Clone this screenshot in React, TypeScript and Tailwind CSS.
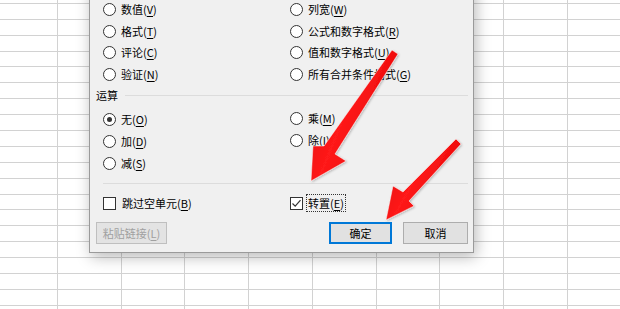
import React from "react";

type Opt = { label: string; key: string; checked?: boolean };

const pasteLeft: Opt[] = [
  { label: "数值", key: "V" },
  { label: "格式", key: "T" },
  { label: "评论", key: "C" },
  { label: "验证", key: "N" },
];

const pasteRight: Opt[] = [
  { label: "列宽", key: "W" },
  { label: "公式和数字格式", key: "R" },
  { label: "值和数字格式", key: "U" },
  { label: "所有合并条件格式", key: "G" },
];

const opsLeft: Opt[] = [
  { label: "无", key: "O", checked: true },
  { label: "加", key: "D" },
  { label: "减", key: "S" },
];

const opsRight: Opt[] = [
  { label: "乘", key: "M" },
  { label: "除", key: "I" },
];

const Label = ({ label, k }: { label: string; k: string }) => (
  <span className="whitespace-nowrap text-[11px] leading-none text-black">
    {label}(<span className="underline underline-offset-2">{k}</span>)
  </span>
);

const Radio = ({ checked }: { checked?: boolean }) => (
  <span className="flex h-[13px] w-[13px] shrink-0 items-center justify-center rounded-full border border-[#333] bg-white">
    {checked && <span className="h-[5px] w-[5px] rounded-full bg-[#333]" />}
  </span>
);

const Checkbox = ({ checked }: { checked?: boolean }) => (
  <span className="flex h-[13px] w-[13px] shrink-0 items-center justify-center border border-[#333] bg-white">
    {checked && (
      <svg width="11" height="11" viewBox="0 0 11 11">
        <path d="M1.5 5.5 L4.2 8.2 L9.5 2.2" fill="none" stroke="#333" strokeWidth="1.2" />
      </svg>
    )}
  </span>
);

const RadioRow = ({ opt, h }: { opt: Opt; h: string }) => (
  <div className={`flex items-center gap-[5px] ${h}`}>
    <Radio checked={opt.checked} />
    <Label label={opt.label} k={opt.key} />
  </div>
);

function SheetGrid() {
  const rows = Array.from({ length: 21 });
  const cols = Array.from({ length: 11 });
  return (
    <div className="-ml-[6px] -mt-[12px] flex flex-col">
      {rows.map((_, r) => (
        <div key={r} className="flex">
          {cols.map((_, c) => (
            <div
              key={c}
              className="h-[15.9px] w-[63.75px] shrink-0 border-b border-r border-[#d2d2d2]"
            />
          ))}
        </div>
      ))}
    </div>
  );
}

function PasteDialog() {
  return (
    <div className="absolute left-[89px] top-[-14px] flex w-[385px] flex-col border border-[#9a9a9a] bg-[#f0f0f0] pb-[8px] pl-[6px] pr-[5px] pt-[12px] shadow-[2px_4px_14px_rgba(0,0,0,0.28)]">
      {/* 粘贴 options */}
      <div className="grid grid-cols-[187px_1fr] pl-[7px]">
        <div className="flex flex-col">
          {pasteLeft.map((o) => (
            <RadioRow key={o.key} opt={o} h="h-[21.5px]" />
          ))}
        </div>
        <div className="flex flex-col">
          {pasteRight.map((o) => (
            <RadioRow key={o.key} opt={o} h="h-[21.5px]" />
          ))}
        </div>
      </div>

      {/* 运算 header */}
      <div className="flex h-[21px] items-center gap-[7px]">
        <span className="text-[11px] leading-none text-black">运算</span>
        <div className="h-px flex-1 bg-[#dcdcdc]" />
      </div>

      <div className="mt-[2px] grid grid-cols-[187px_1fr] pl-[7px]">
        <div className="flex flex-col">
          {opsLeft.map((o) => (
            <RadioRow key={o.key} opt={o} h="h-[22px]" />
          ))}
        </div>
        <div className="flex flex-col">
          {opsRight.map((o) => (
            <RadioRow key={o.key} opt={o} h="h-[21.5px]" />
          ))}
        </div>
      </div>

      <div className="ml-[7px] mt-[9px] h-px bg-[#dcdcdc]" />

      {/* checkboxes */}
      <div className="mt-[9px] grid h-[20px] grid-cols-[187px_1fr] items-center pl-[7px]">
        <div className="flex items-center gap-[6px]">
          <Checkbox />
          <Label label="跳过空单元" k="B" />
        </div>
        <div className="flex items-center gap-[3px]">
          <Checkbox checked />
          <span className="flex h-[18px] items-center border border-dotted border-[#333] px-[1px]">
            <Label label="转置" k="E" />
          </span>
        </div>
      </div>

      {/* buttons */}
      <div className="mt-[9px] flex items-center">
        <button className="h-[22px] w-[71px] border border-[#bfbfbf] bg-[#e3e3e3] text-[11px] leading-none text-[#a0a0a0]">
          粘贴链接(<span className="underline underline-offset-2">L</span>)
        </button>
        <button className="ml-auto h-[22px] w-[63px] border-2 border-[#0078d7] bg-[#e1e1e1] text-[11px] leading-none text-black">
          确定
        </button>
        <button className="ml-[11px] h-[22px] w-[65px] border border-[#adadad] bg-[#e1e1e1] text-[11px] leading-none text-black">
          取消
        </button>
      </div>
    </div>
  );
}

function Arrows() {
  return (
    <svg
      className="pointer-events-none absolute inset-0"
      width="620"
      height="309"
      viewBox="0 0 620 309"
    >
      <defs>
        <linearGradient id="ar1" x1="0" y1="0" x2="1" y2="0.6">
          <stop offset="0" stopColor="#d80000" />
          <stop offset="0.5" stopColor="#ff1a1a" />
          <stop offset="1" stopColor="#e00000" />
        </linearGradient>
        <filter id="glow" x="-20%" y="-20%" width="140%" height="140%">
          <feDropShadow dx="1" dy="1" stdDeviation="1.2" floodColor="#000" floodOpacity="0.25" />
        </filter>
      </defs>
      <polygon
        points="392,50 398,54 335,154 346,161 311,181 313,146 324,146"
        fill="url(#ar1)"
        stroke="#fff"
        strokeOpacity="0.6"
        strokeWidth="0.8"
        strokeLinejoin="round"
        filter="url(#glow)"
      />
      <polygon
        points="456,139 461,144 409,201 414,206 386,220 393,186 403,192"
        fill="url(#ar1)"
        stroke="#fff"
        strokeOpacity="0.6"
        strokeWidth="0.8"
        strokeLinejoin="round"
        filter="url(#glow)"
      />
    </svg>
  );
}

export default function App() {
  return (
    <div className="relative h-[309px] w-[620px] overflow-hidden bg-white font-['Noto_Sans_CJK_SC','Noto_Sans',sans-serif]">
      <SheetGrid />
      <PasteDialog />
      <Arrows />
    </div>
  );
}
